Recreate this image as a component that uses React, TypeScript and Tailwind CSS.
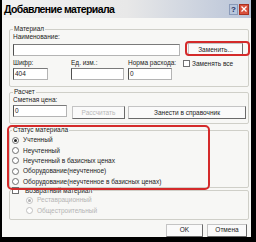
import React from "react"

const font = { fontFamily: '"Liberation Sans", Arial, sans-serif' }

function Label({ children, disabled }: { children: React.ReactNode; disabled?: boolean }) {
  return (
    <div className={`h-[8px] text-[6.5px] leading-[8px] whitespace-nowrap ${disabled ? "text-[#b0b0b0]" : "text-[#222]"}`}>
      {children}
    </div>
  )
}

function Input({ value, className }: { value?: string; className: string }) {
  return (
    <div
      className={`shrink-0 h-[12px] bg-white border border-[#b4b4b4] border-l-[#505050] border-t-[#7a7a7a] px-[1px] text-[6.5px] leading-[10px] text-[#222] ${className}`}
    >
      {value}
    </div>
  )
}

function Button({ children, className, disabled }: { children: React.ReactNode; className: string; disabled?: boolean }) {
  return (
    <div
      className={`shrink-0 h-[13px] flex items-center justify-center bg-[#fafafa] border border-[#c4c4c4] border-r-[#6a6a6a] border-b-[#6a6a6a] text-[6.5px] leading-[8px] whitespace-nowrap ${disabled ? "text-[#b8b8b8]" : "text-[#222]"} ${className}`}
    >
      {children}
    </div>
  )
}

function Radio({ label, checked, disabled }: { label: string; checked?: boolean; disabled?: boolean }) {
  return (
    <div className="h-[10.4px] flex items-center gap-[4px]">
      <span
        className={`w-[7px] h-[7px] rounded-full border flex items-center justify-center bg-white ${disabled ? "border-[#c0c0c0]" : "border-[#707070]"}`}
      >
        {checked && <span className={`w-[3px] h-[3px] rounded-full ${disabled ? "bg-[#b0b0b0]" : "bg-[#222]"}`} />}
      </span>
      <span className={`text-[6.5px] leading-[8px] whitespace-nowrap ${disabled ? "text-[#b4b4b4]" : "text-[#222]"}`}>{label}</span>
    </div>
  )
}

function Group({ title, children, className }: { title: React.ReactNode; children: React.ReactNode; className?: string }) {
  return (
    <fieldset className={`border border-[#cfcfc8] rounded-[2px] pr-[2px] ${className ?? ""}`}>
      <legend className="px-[1px] text-[6.5px] leading-[8px] text-[#222]">{title}</legend>
      {children}
    </fieldset>
  )
}

export default function App() {
  return (
    <div className="w-[256px] h-[242px] bg-black flex flex-col pl-[2px] pr-[5px] pb-[5px]" style={font}>
      <div className="flex-1 flex flex-col bg-[#f7f7f5] relative">
        {/* title bar */}
        <div className="h-[18px] flex items-center bg-gradient-to-r from-[#f2f2f2] via-[#e8e8e8] to-[#b9c4d8] pl-[2px] pr-[2px]">
          <span className="flex-1 text-[10.5px] tracking-[-0.6px] font-bold text-black leading-[14px] whitespace-nowrap">
            Добавление материала
          </span>
          <div className="flex gap-[1px]">
            <span className="w-[9px] h-[11px] bg-[#b8c6dc] border border-[#8a9ab8] text-[8px] leading-[9px] font-bold text-[#203060] flex items-center justify-center">
              ?
            </span>
            <span className="w-[10px] h-[11px] bg-[#d8503c] border border-[#a83020] flex items-center justify-center">
              <svg width="6" height="6" viewBox="0 0 6 6">
                <path d="M0.5 0.5 L5.5 5.5 M5.5 0.5 L0.5 5.5" stroke="#fff" strokeWidth="1.3" />
              </svg>
            </span>
          </div>
        </div>

        <div className="flex-1 flex flex-col pl-[7px] pr-[2px] pt-[7px]">
          <Group title="Материал" className="pl-[3px] pb-[6px]">
            <Label>Наименование:</Label>
            <div className="flex items-center mt-[2px]">
              <Input className="w-[167px]" />
              <Button className="ml-[8px] w-[55px]">Заменить...</Button>
            </div>
            <div className="flex mt-[3px]">
              <div className="w-[58px] shrink-0 flex flex-col gap-[1px]">
                <Label>Шифр:</Label>
                <Input value="404" className="w-[35px]" />
              </div>
              <div className="w-[57px] shrink-0 flex flex-col gap-[1px]">
                <Label>Ед. изм.:</Label>
                <Input className="w-[53px]" />
              </div>
              <div className="w-[55px] shrink-0 flex flex-col gap-[1px]">
                <Label>Норма расхода:</Label>
                <Input value="0" className="w-[44px]" />
              </div>
              <div className="flex items-start gap-[2px] pt-[1px]">
                <span className="w-[7px] h-[7px] bg-white border border-[#707070]" />
                <span className="text-[6.5px] leading-[8px] text-[#222] whitespace-nowrap">Заменять все</span>
              </div>
            </div>
          </Group>

          <Group title="Расчет" className="pl-[3px] mt-[1px] pb-[4px]">
            <Label>Сметная цена:</Label>
            <div className="flex items-start mt-[1px]">
              <Input value="0" className="w-[54px]" />
              <Button disabled className="ml-[5px] mt-[1px] w-[53px]">
                Рассчитать
              </Button>
              <Button className="ml-[3px] mt-[1px] w-[118px]">Занести в справочник</Button>
            </div>
          </Group>

          <Group title="Статус материала" className="pl-[2px] mt-[2px]">
            <div className="pt-[1px]">
              <Radio label="Учтенный" checked />
              <Radio label="Неучтенный" />
              <Radio label="Неучтенный в базисных ценах" />
              <Radio label="Оборудование(неучтенное)" />
              <Radio label="Оборудование(неучтенное в базисных ценах)" />
            </div>
          </Group>

          <Group
            title={
              <span className="flex items-center gap-[6px]">
                <span className="w-[7px] h-[7px] bg-white border border-[#707070]" />
                Возвратный материал
              </span>
            }
            className="pl-[1px] pb-[3px] -mt-[1px]"
          >
            <div className="pl-[15px]">
              <Radio label="Реставрационный" checked disabled />
              <Radio label="Общестроительный" disabled />
            </div>
          </Group>

          <div className="flex justify-end gap-[4px] mt-[4px] pr-[2px]">
            <Button className="w-[37px]">OK</Button>
            <Button className="w-[40px]">Отмена</Button>
          </div>
        </div>

        {/* red annotation marks */}
        <div className="absolute left-[183px] top-[41px] w-[65px] h-[15px] border-[2px] border-[#d42a2a] rounded-[4px]" />
        <div className="absolute left-[5px] top-[125px] w-[203px] h-[65px] border-[2px] border-[#d42a2a] rounded-[5px]" />
      </div>
    </div>
  )
}
